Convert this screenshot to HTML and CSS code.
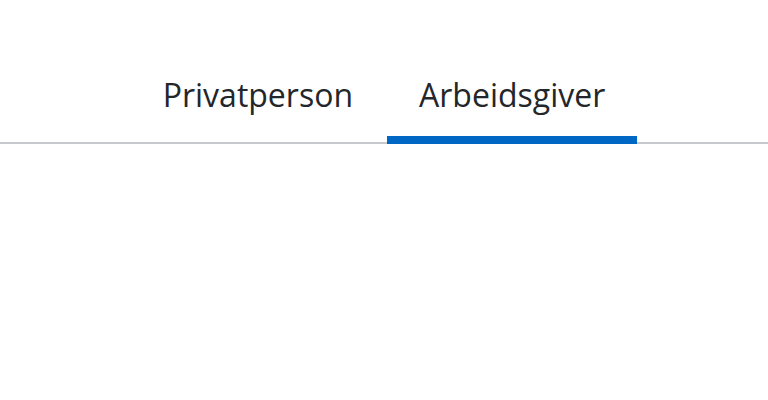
FILE: index.html
```html
<!DOCTYPE html>
<html lang="no">
<head>
  <meta charset="utf-8">
  <link rel="stylesheet" href="styles.css">
</head>
<body>
  <nav class="audience-tabs">
    <a class="audience-tab" href="#">Privatperson</a>
    <a class="audience-tab audience-tab--active" href="#">Arbeidsgiver</a>
  </nav>
</body>
</html>
```

FILE: styles.css
```css
body {
  margin: 0;
  background: #fff;
  font-family: "Open Sans", Lato, sans-serif;
  color: #23262a;
}
.audience-tabs {
  display: flex;
  justify-content: center;
  gap: 2px;
  padding-top: 76px;
  border-bottom: 2px solid #c6c9ce;
}
.audience-tab {
  font-size: 32px;
  line-height: 37px;
  padding: 0 32px 23px;
  margin-bottom: -2px;
  border-bottom: 8px solid transparent;
  color: inherit;
  text-decoration: none;
}
.audience-tab--active {
  border-bottom-color: #0067c5;
}
```
